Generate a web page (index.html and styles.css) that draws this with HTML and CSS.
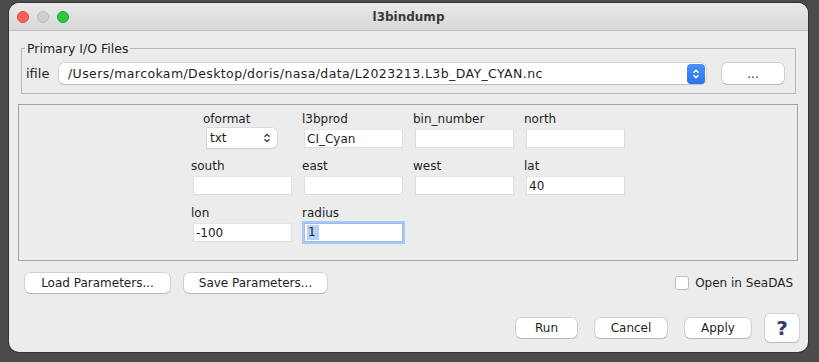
FILE: index.html
```html
<!DOCTYPE html>
<html>
<head>
    <title>l3bindump</title>
    <link rel="stylesheet" href="styles.css">
</head>
<body>
    <div class="window">
        <div class="titlebar">
            <div class="lights">
                <span class="light red"></span>
                <span class="light gray"></span>
                <span class="light green"></span>
            </div>
            <div class="title">l3bindump</div>
            <div></div>
        </div>

        <fieldset class="io-files">
            <legend>Primary I/O Files</legend>
            <div class="file-row">
                <label class="file-label" for="ifile">ifile</label>
                <div class="path-combo" id="ifile">
                    <span class="path-text">/Users/marcokam/Desktop/doris/nasa/data/L2023213.L3b_DAY_CYAN.nc</span>
                    <span class="stepper">
                        <svg width="8" height="12" viewBox="0 0 8 12"><polyline points="1.5,4.8 4,2.3 6.5,4.8"/><polyline points="1.5,7.2 4,9.7 6.5,7.2"/></svg>
                    </span>
                </div>
                <button class="btn browse">...</button>
            </div>
        </fieldset>

        <div class="params">
            <div class="param-grid">
                <div class="cell cell-select">
                    <span class="param-label">oformat</span>
                    <div class="mini-combo">
                        <span>txt</span>
                        <svg width="8" height="12" viewBox="0 0 8 12"><polyline points="1.5,4.8 4,2.3 6.5,4.8"/><polyline points="1.5,7.2 4,9.7 6.5,7.2"/></svg>
                    </div>
                </div>
                <div class="cell">
                    <span class="param-label">l3bprod</span>
                    <input class="field" type="text" value="CI_Cyan">
                </div>
                <div class="cell">
                    <span class="param-label">bin_number</span>
                    <input class="field" type="text" value="">
                </div>
                <div class="cell">
                    <span class="param-label">north</span>
                    <input class="field" type="text" value="">
                </div>

                <div class="cell">
                    <span class="param-label">south</span>
                    <input class="field" type="text" value="">
                </div>
                <div class="cell">
                    <span class="param-label">east</span>
                    <input class="field" type="text" value="">
                </div>
                <div class="cell">
                    <span class="param-label">west</span>
                    <input class="field" type="text" value="">
                </div>
                <div class="cell">
                    <span class="param-label">lat</span>
                    <input class="field" type="text" value="40">
                </div>

                <div class="cell">
                    <span class="param-label">lon</span>
                    <input class="field" type="text" value="-100">
                </div>
                <div class="cell">
                    <span class="param-label">radius</span>
                    <div class="field focused"><span class="selected">1</span></div>
                </div>
            </div>
        </div>

        <div class="param-buttons">
            <button class="btn load">Load Parameters...</button>
            <button class="btn save">Save Parameters...</button>
            <label class="open-seadas"><span class="check"></span>Open in SeaDAS</label>
        </div>

        <div class="actions">
            <button class="btn run">Run</button>
            <button class="btn cancel">Cancel</button>
            <button class="btn apply">Apply</button>
            <button class="btn help">?</button>
        </div>
    </div>
</body>
</html>
```

FILE: styles.css
```css
body {
    margin: 0;
    height: 362px;
    overflow: hidden;
    background-color: #4b4b4b;
    font-family: "DejaVu Sans", sans-serif;
    font-size: 12px;
    color: #1e1e1e;
}

.window {
    margin: 3px 0 0 9px;
    width: 799px;
    height: 349px;
    background-color: #ececec;
    border-radius: 10px;
    overflow: hidden;
    box-shadow: 0 0 0 1px rgba(0, 0, 0, 0.3);
    display: flex;
    flex-direction: column;
}

/* title bar */
.titlebar {
    height: 27px;
    flex-shrink: 0;
    border-bottom: 1px solid #c2c2c2;
    background: linear-gradient(#e9e9e9, #d8d8d8);
    display: grid;
    grid-template-columns: 1fr auto 1fr;
    align-items: center;
}

.lights {
    display: flex;
    gap: 8px;
    padding-left: 8px;
}

.light {
    width: 12px;
    height: 12px;
    border-radius: 50%;
    box-sizing: border-box;
}

.red { background-color: #fe5f57; border: 1px solid #e1473f; }
.gray { background-color: #cecece; border: 1px solid #bcbcbc; }
.green { background-color: #28c840; border: 1px solid #1eaa30; }

.title {
    font-weight: bold;
    font-size: 12px;
    color: #3a3a3a;
}

/* buttons */
.btn {
    font-family: "DejaVu Sans", sans-serif;
    font-size: 12px;
    color: #1e1e1e;
    height: 20px;
    padding: 0;
    background-color: #fff;
    border: none;
    border-radius: 5px;
    box-shadow: 0 0 0 0.5px rgba(0, 0, 0, 0.22), 0 1px 1px rgba(0, 0, 0, 0.12);
}

/* primary io files */
.io-files {
    margin: 10px 12px 0;
    padding: 7px 11px 9px 4px;
    border: 1px solid #b8b8b8;
    min-inline-size: 0;
}

.io-files legend {
    font-size: 12.5px;
    line-height: 15px;
    padding: 0 2px;
    margin-left: -1px;
}

.file-row {
    display: flex;
    align-items: center;
}

.file-label {
    font-size: 13px;
    width: 33px;
}

.path-combo {
    flex: 1;
    height: 21px;
    display: flex;
    align-items: center;
    background-color: #fff;
    border-radius: 5px;
    box-shadow: 0 0 0 0.5px rgba(0, 0, 0, 0.2), 0 1px 1px rgba(0, 0, 0, 0.1);
}

.path-text {
    flex: 1;
    font-size: 12.5px;
    letter-spacing: 0.4px;
    padding-left: 9px;
}

.stepper {
    width: 18px;
    height: 20px;
    margin-right: 1px;
    border-radius: 4px;
    background: linear-gradient(#4a8ff8, #2a74ee);
    display: flex;
    align-items: center;
    justify-content: center;
}

.stepper svg polyline {
    fill: none;
    stroke: #fff;
    stroke-width: 1.5;
}

.browse {
    width: 62px;
    height: 21px;
    margin-left: 16px;
}

/* parameter grid */
.params {
    margin: 10px 10px 0 9px;
    padding: 7px 0 18px;
    border: 1px solid #a3a3a3;
    display: flex;
    justify-content: center;
}

.param-grid {
    display: grid;
    grid-template-columns: repeat(4, 100px);
    column-gap: 11px;
    row-gap: 11px;
    margin-left: 3px;
}

.cell {
    display: flex;
    flex-direction: column;
}

.param-label {
    line-height: 14px;
    margin-left: -2px;
}

.field {
    box-sizing: border-box;
    width: 99px;
    height: 19px;
    margin-top: 3px;
    padding: 0 2px;
    font-family: "DejaVu Sans", sans-serif;
    font-size: 12px;
    color: #1e1e1e;
    background-color: #fff;
    border: 1px solid #dedede;
    border-top-color: #e6e6e6;
    outline: none;
}

.field.focused {
    display: flex;
    align-items: center;
    border-color: #9bbcec;
    box-shadow: 0 0 0 2px #a9c8f4;
}

.selected {
    background-color: #b3d3fb;
    padding: 0 3px 0 1px;
    line-height: 15px;
}

.cell-select .param-label {
    margin-left: 10px;
}

.mini-combo {
    width: 70px;
    height: 20px;
    box-sizing: border-box;
    margin: 2px 0 0 14px;
    padding: 0 6px 0 3px;
    display: flex;
    align-items: center;
    justify-content: space-between;
    background-color: #fff;
    border-radius: 0 5px 5px 0;
    box-shadow: 0 0 0 0.5px rgba(0, 0, 0, 0.15), 0 1px 1px rgba(0, 0, 0, 0.08);
}

.mini-combo svg polyline {
    fill: none;
    stroke: #333;
    stroke-width: 1.3;
}

/* load / save row */
.param-buttons {
    margin-top: 12px;
    padding: 0 15px 0 16px;
    display: flex;
    align-items: center;
    gap: 14px;
}

.load { width: 145px; }
.save { width: 143px; }

.open-seadas {
    margin-left: auto;
    display: flex;
    align-items: center;
    gap: 6px;
}

.check {
    width: 14px;
    height: 14px;
    box-sizing: border-box;
    background-color: #fff;
    border: 1px solid #bdbdbd;
    border-radius: 3px;
}

/* bottom actions */
.actions {
    margin-top: 21px;
    padding: 0 9px;
    display: flex;
    justify-content: flex-end;
    align-items: center;
    gap: 18px;
}

.run { width: 61px; }
.cancel { width: 72px; }
.apply { width: 66px; }

.help {
    width: 34px;
    height: 28px;
    margin-left: -4px;
    font-size: 20px;
    font-weight: bold;
    color: #2f3c6c;
}
```
